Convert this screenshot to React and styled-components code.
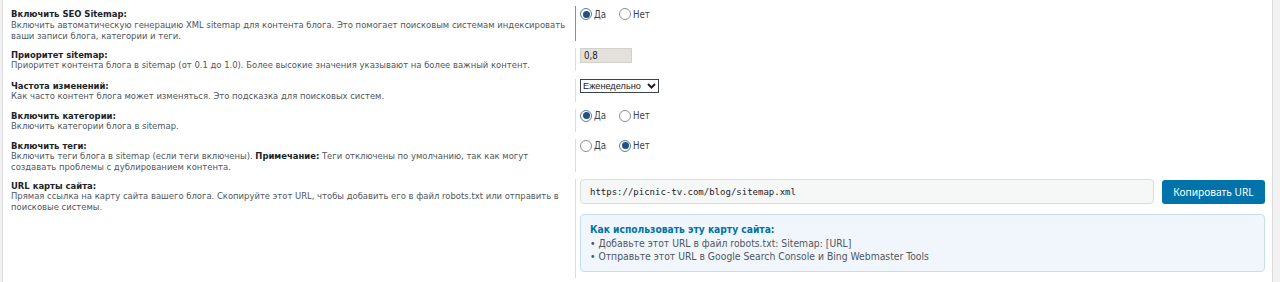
import React from "react";
import styled, { createGlobalStyle } from "styled-components";

const GlobalStyle = createGlobalStyle`
  html, body { margin: 0; padding: 0; background: #f1f1f1; }
  body { font-family: "DejaVu Sans Condensed", "DejaVu Sans", "Liberation Sans", sans-serif; }
  * { box-sizing: border-box; }
`;

const Panel = styled.div`
  margin: 0 7px 0 2px;
  min-height: 282px;
  background: #fff;
  border-left: 1px solid #dcdcde;
  border-right: 1px solid #dcdcde;
  padding-top: 6px;
`;

const Row = styled.div`
  display: grid;
  grid-template-columns: 572px 1fr;
  margin-bottom: ${(p) => p.$gap ?? 8}px;
`;

const Label = styled.div`
  padding: 2px 0 0 8px;
`;

const Title = styled.div`
  font-weight: bold;
  font-size: 9.4px;
  line-height: ${(p) => p.$lh ?? 10}px;
  color: #1d2327;
`;

const Desc = styled.div`
  font-size: 9.4px;
  line-height: 10.5px;
  color: #50575e;
  white-space: nowrap;
  strong { color: #1d2327; }
`;

const Field = styled.div`
  border-left: 1px solid ${(p) => (p.$dark ? "#8c8f94" : "#dcdcde")};
  padding: ${(p) => p.$top ?? 0}px 7px ${(p) => p.$bottom ?? 0}px 4px;
`;

const RadioGroup = styled.div`
  display: flex;
  align-items: center;
  gap: 13px;
`;

const RadioLabel = styled.label`
  display: inline-flex;
  align-items: center;
  gap: 2px;
  font-size: 9.6px;
  line-height: 13px;
  color: #3c434a;
`;

const RadioInput = styled.input.attrs({ type: "radio" })`
  appearance: none;
  margin: 0;
  width: 12px;
  height: 12px;
  border-radius: 50%;
  border: 1px solid #8c8f94;
  background: #fff;
  display: inline-grid;
  place-items: center;
  &:checked { border-color: #5b7fa3; }
  &:checked::before {
    content: "";
    width: 7px;
    height: 7px;
    border-radius: 50%;
    background: #23507d;
  }
`;

const SmallInput = styled.input`
  display: block;
  width: 52px;
  height: 15px;
  border: 1px solid #d4d1cb;
  background: #e4e1dc;
  font-family: inherit;
  font-size: 9.6px;
  color: #1d2327;
  padding: 0 3px;
  margin: 0;
  border-radius: 0;
`;

const SelectWrap = styled.div`
  position: relative;
  width: 79px;
  height: 14px;
`;

const Select = styled.select`
  display: block;
  appearance: none;
  width: 100%;
  height: 100%;
  border: 1px solid #3c434a;
  border-radius: 0;
  background: #fff;
  font-family: "Liberation Sans", sans-serif;
  font-size: 9.2px;
  color: #1d2327;
  padding: 0 0 0 2px;
  margin: 0;
`;

const Chevron = styled.svg`
  position: absolute;
  right: 3px;
  top: 4px;
  pointer-events: none;
`;

const UrlLine = styled.div`
  display: flex;
  gap: 8px;
  align-items: center;
`;

const UrlInput = styled.input`
  flex: 1;
  height: 25px;
  border: 1px solid #dcdcde;
  border-radius: 4px;
  background: #f6f7f7;
  font-family: "DejaVu Sans Mono", "Liberation Mono", monospace;
  font-size: 9px;
  color: #1d2327;
  padding: 0 9px;
  margin: 0;
`;

const CopyButton = styled.button`
  width: 103px;
  height: 24px;
  border: none;
  border-radius: 3px;
  background: #0073aa;
  color: #fff;
  font-family: "Noto Sans", "Open Sans", sans-serif;
  font-size: 10.2px;
  padding: 0;
`;

const InfoBox = styled.div`
  margin-top: 10px;
  background: #f0f6fc;
  border: 1px solid #c5def4;
  border-radius: 4px;
  padding: 8px 9px 9px 9px;
  height: 58px;
`;

const InfoTitle = styled.div`
  font-weight: bold;
  font-size: 10.2px;
  line-height: 14px;
  color: #0073aa;
`;

const InfoItem = styled.div`
  font-size: 10.3px;
  line-height: 13px;
  color: #50575e;
`;

let radioId = 0;
function Radios({ yes }) {
  const name = `r${radioId++}`;
  return (
    <RadioGroup>
      <RadioLabel>
        <RadioInput defaultChecked={yes} name={name} />
        Да
      </RadioLabel>
      <RadioLabel>
        <RadioInput defaultChecked={!yes} name={name} />
        Нет
      </RadioLabel>
    </RadioGroup>
  );
}

export default function App() {
  return (
    <>
      <GlobalStyle />
      <Panel>
        <Row $gap={7}>
          <Label>
            <Title $lh={12}>Включить SEO Sitemap:</Title>
            <Desc>
              Включить автоматическую генерацию XML sitemap для контента блога. Это помогает поисковым системам индексировать
              <br />
              ваши записи блога, категории и теги.
            </Desc>
          </Label>
          <Field $dark $top={1.5}>
            <Radios yes />
          </Field>
        </Row>
        <Row $gap={8.5}>
          <Label>
            <Title>Приоритет sitemap:</Title>
            <Desc>Приоритет контента блога в sitemap (от 0.1 до 1.0). Более высокие значения указывают на более важный контент.</Desc>
          </Label>
          <Field>
            <SmallInput defaultValue="0,8" readOnly />
          </Field>
        </Row>
        <Row $gap={7.5}>
          <Label>
            <Title>Частота изменений:</Title>
            <Desc>Как часто контент блога может изменяться. Это подсказка для поисковых систем.</Desc>
          </Label>
          <Field>
            <SelectWrap>
              <Select defaultValue="weekly">
                <option value="weekly">Еженедельно</option>
              </Select>
              <Chevron width="9" height="6" viewBox="0 0 9 6">
                <path d="M1 1l3.5 3.5L8 1" fill="none" stroke="#1d2327" strokeWidth="2" />
              </Chevron>
            </SelectWrap>
          </Field>
        </Row>
        <Row $gap={7.5}>
          <Label>
            <Title>Включить категории:</Title>
            <Desc>Включить категории блога в sitemap.</Desc>
          </Label>
          <Field>
            <Radios yes />
          </Field>
        </Row>
        <Row $gap={7}>
          <Label>
            <Title>Включить теги:</Title>
            <Desc>
              Включить теги блога в sitemap (если теги включены). <strong>Примечание:</strong> Теги отключены по умолчанию, так как могут
              <br />
              создавать проблемы с дублированием контента.
            </Desc>
          </Label>
          <Field>
            <Radios yes={false} />
          </Field>
        </Row>
        <Row $gap={0}>
          <Label>
            <Title>URL карты сайта:</Title>
            <Desc>
              Прямая ссылка на карту сайта вашего блога. Скопируйте этот URL, чтобы добавить его в файл robots.txt или отправить в
              <br />
              поисковые системы.
            </Desc>
          </Label>
          <Field $bottom={6}>
            <UrlLine>
              <UrlInput defaultValue="https://picnic-tv.com/blog/sitemap.xml" readOnly />
              <CopyButton>Копировать URL</CopyButton>
            </UrlLine>
            <InfoBox>
              <InfoTitle>Как использовать эту карту сайта:</InfoTitle>
              <InfoItem>• Добавьте этот URL в файл robots.txt: Sitemap: [URL]</InfoItem>
              <InfoItem>• Отправьте этот URL в Google Search Console и Bing Webmaster Tools</InfoItem>
            </InfoBox>
          </Field>
        </Row>
      </Panel>
    </>
  );
}
